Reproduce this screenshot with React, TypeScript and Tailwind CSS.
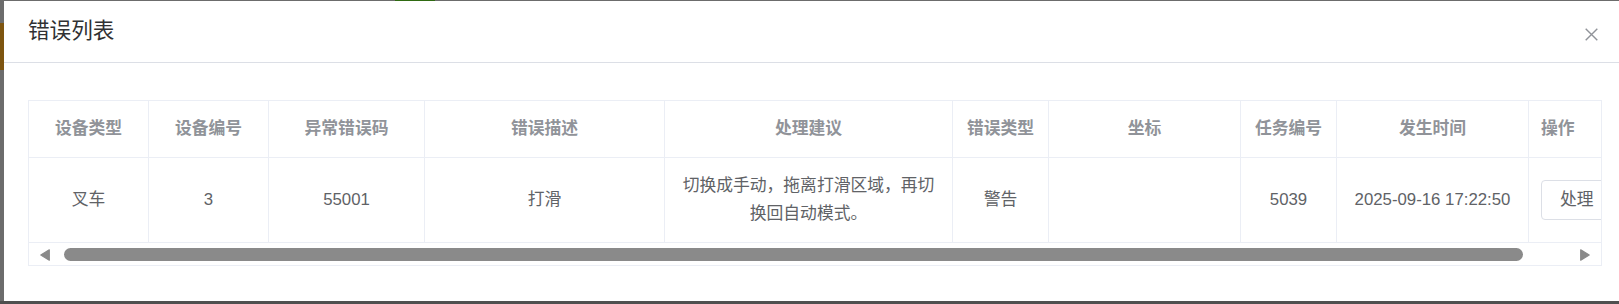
import React from "react";

const cols = [
  { title: "设备类型", value: "叉车" },
  { title: "设备编号", value: "3" },
  { title: "异常错误码", value: "55001" },
  { title: "错误描述", value: "打滑" },
  { title: "处理建议", value: "切换成手动，拖离打滑区域，再切换回自动模式。" },
  { title: "错误类型", value: "警告" },
  { title: "坐标", value: "" },
  { title: "任务编号", value: "5039" },
  { title: "发生时间", value: "2025-09-16 17:22:50" },
];

export default function App() {
  return (
    <div className="relative w-[1619px] h-[304px] overflow-hidden bg-[#6c6c6c] [font-family:'Liberation_Sans','Noto_Sans_CJK_SC',sans-serif]">
      {/* page underneath the overlay */}
      <div className="absolute left-0 top-[23px] w-[4px] h-[47px] bg-[#7e5510]" />
      <div className="absolute left-[395px] top-0 w-[40px] h-[1px] bg-[#2f6a12]" />
      <div className="absolute left-0 bottom-0 w-full h-[3px] bg-[#4f4f4f]" />

      <div className="relative ml-[4px] mt-[1px] w-[1622px] h-[300px] bg-white">
        <div className="flex items-center justify-between h-[62px] pl-[24px] pr-[28px] border-b border-[#dcdfe6]">
          <div className="text-[21.6px] leading-[28px] text-[#303133] -mt-[1px]">错误列表</div>
          <svg width="13" height="13" viewBox="0 0 13 13" className="mt-[6px]">
            <path d="M0.7 0.7 L12.3 12.3 M12.3 0.7 L0.7 12.3" stroke="#909399" strokeWidth="1.4" fill="none" />
          </svg>
        </div>

        <div className="pt-[37px] px-[24px]">
          <div className="w-[1574px] border border-[#ebeef5] overflow-hidden">
            <div className="grid grid-cols-[120px_120px_156px_240px_288px_96px_192px_96px_192px_144px] w-[1644px]">
              {cols.map((c) => (
                <div
                  key={c.title}
                  className="h-[57px] flex items-center justify-center px-[12px] border-r border-b border-[#ebeef5] text-[16.8px] leading-[27.6px] font-bold text-[#909399]"
                >
                  {c.title}
                </div>
              ))}
              <div className="h-[57px] flex items-center px-[12px] border-r border-b border-[#ebeef5] text-[16.8px] leading-[27.6px] font-bold text-[#909399]">
                操作
              </div>

              {cols.map((c) => (
                <div
                  key={c.title + "-v"}
                  className="h-[85px] flex items-center justify-center text-center px-[12px] border-r border-b border-[#ebeef5] text-[16.8px] leading-[27.6px] text-[#606266]"
                >
                  {c.value}
                </div>
              ))}
              <div className="h-[85px] flex items-center px-[12px] border-r border-b border-[#ebeef5]">
                <button className="shrink-0 h-[40px] px-[18px] border border-[#dcdfe6] rounded-[4px] bg-white text-[16.8px] leading-[20px] text-[#606266] whitespace-nowrap">
                  处理
                </button>
              </div>
            </div>

            {/* horizontal scrollbar */}
            <div className="flex items-center h-[22px] pt-[1px] bg-white">
              <svg width="10" height="12" viewBox="0 0 10 12" className="ml-[11px] shrink-0">
                <path d="M9.3 0.8 L9.3 11.2 L0.8 6 Z" fill="#8a8a8a" stroke="#8a8a8a" strokeWidth="1.2" strokeLinejoin="round" />
              </svg>
              <div className="ml-[14px] w-[1459px] h-[13px] rounded-full bg-[#8a8a8a] shrink-0" />
              <svg width="10" height="12" viewBox="0 0 10 12" className="ml-auto mr-[11px] shrink-0">
                <path d="M0.7 0.8 L0.7 11.2 L9.2 6 Z" fill="#8a8a8a" stroke="#8a8a8a" strokeWidth="1.2" strokeLinejoin="round" />
              </svg>
            </div>
          </div>
        </div>
      </div>
    </div>
  );
}
